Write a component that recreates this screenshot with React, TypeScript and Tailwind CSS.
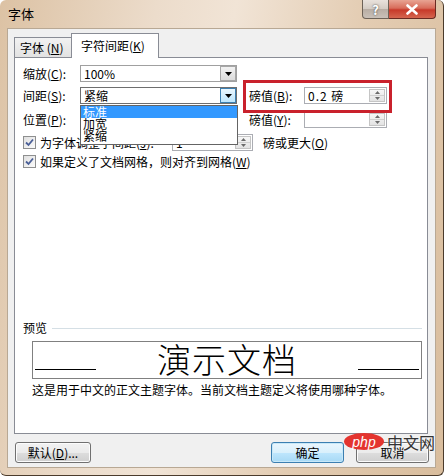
import React from "react";

function Arrow({ active = false }: { active?: boolean }) {
  return (
    <div
      className={
        "w-[16px] h-full flex items-center justify-center border-l " +
        (active
          ? "bg-[linear-gradient(180deg,#eaf6fd,#bee6fd)] border border-[#3c7fb1]"
          : "bg-[linear-gradient(180deg,#f2f2f2,#dcdcdc)] border border-[#a7a7a7]")
      }
    >
      <svg width="7" height="4" viewBox="0 0 7 4">
        <path d="M0 0H7L3.5 4Z" fill="#000" />
      </svg>
    </div>
  );
}

function Combo({ value, active = false, w = 157 }: { value: string; active?: boolean; w?: number }) {
  return (
    <div
      className={
        "h-[17px] flex items-stretch bg-white border " +
        (active ? "border-[#6e6e6e]" : "border-[#a0a0a0]")
      }
      style={{ width: w }}
    >
      <div className="flex-1 pl-[3px] leading-[15px]">{value}</div>
      <div className="p-[0px]">
        <Arrow active={active} />
      </div>
    </div>
  );
}

function Spin({ value, w = 83 }: { value: string; w?: number }) {
  return (
    <div className="h-[17px] flex items-stretch bg-white border border-[#abadb3]" style={{ width: w }}>
      <div className="flex-1 pl-[3px] leading-[15px] tracking-[1px]">{value}</div>
      <div className="w-[16px] flex flex-col my-[1px] mr-[1px] border border-[#c5c5c5] bg-[linear-gradient(180deg,#f7f7f7,#e3e3e3)]">
        <div className="flex-1 flex items-center justify-center border-b border-[#d0d0d0]">
          <svg width="5" height="3" viewBox="0 0 5 3">
            <path d="M0 3H5L2.5 0Z" fill="#6b6b6b" />
          </svg>
        </div>
        <div className="flex-1 flex items-center justify-center">
          <svg width="5" height="3" viewBox="0 0 5 3">
            <path d="M0 0H5L2.5 3Z" fill="#6b6b6b" />
          </svg>
        </div>
      </div>
    </div>
  );
}

function Check() {
  return (
    <div className="w-[13px] h-[13px] border border-[#8e8f8f] bg-[linear-gradient(135deg,#e0e0e0,#fbfbfb)] flex items-center justify-center">
      <svg width="9" height="9" viewBox="0 0 9 9">
        <path d="M1 4.5L3.5 7L8 1.5" stroke="#4a5f97" strokeWidth="1.8" fill="none" />
      </svg>
    </div>
  );
}

function Btn({ children, def = false, w = 73 }: { children: React.ReactNode; def?: boolean; w?: number }) {
  return (
    <div
      className={
        "h-[21px] rounded-[3px] border flex items-center justify-center leading-none " +
        (def
          ? "border-[#3c7fb1] bg-[linear-gradient(180deg,#eaf6fd_0%,#d9f0fc_50%,#bee6fd_51%,#a7d9f5_100%)] shadow-[inset_0_0_0_1px_#c8e8f8]"
          : "border-[#707070] bg-[linear-gradient(180deg,#f2f2f2_0%,#ebebeb_50%,#dddddd_51%,#cfcfcf_100%)] shadow-[inset_0_0_0_1px_#fcfcfc]")
      }
      style={{ width: w }}
    >
      {children}
    </div>
  );
}

export default function App() {
  return (
    <div className="w-[444px] h-[476px] bg-white font-['Noto_Sans_CJK_SC',sans-serif] text-[12px] text-black">
      <div className="relative w-[444px] h-[476px] rounded-[6px] border-r border-b border-[#4b3b2c] bg-[linear-gradient(100deg,#dcc2a4_0%,#ecdccb_30%,#f1e4d6_45%,#e3ccb2_70%,#d9bd9d_100%)] flex flex-col px-[7px]">
        {/* title bar */}
        <div className="h-[28px] flex items-start justify-between">
          <div className="mt-[6px] ml-[1px] text-[13px] leading-[16px]">字体</div>
          <div className="flex">
            <div className="w-[27px] h-[19px] rounded-bl-[4px] border border-t-0 border-[#6d6257] bg-[linear-gradient(180deg,#e9e2dc_0%,#d3cbc3_50%,#b8ada3_51%,#c9c0b8_100%)] flex items-center justify-center">
              <span className="text-[13px] font-bold text-white leading-none [text-shadow:0_0_2px_#333]">?</span>
            </div>
            <div className="w-[47px] h-[19px] rounded-br-[4px] border border-t-0 border-l-0 border-[#6a2a22] bg-[linear-gradient(180deg,#e8a493_0%,#d86d5b_45%,#c7392a_55%,#d5664f_100%)] flex items-center justify-center">
              <svg width="12" height="11" viewBox="0 0 12 11">
                <path d="M1.5 1.5L10.5 9.5M10.5 1.5L1.5 9.5" stroke="#fff" strokeWidth="2.6" strokeLinecap="round" />
              </svg>
            </div>
          </div>
        </div>
        {/* client */}
        <div className="h-[440px] bg-[#f0f0f0] border border-[#b8a894] flex flex-col px-[6px] pt-[4px]">
          {/* tabs */}
          <div className="h-[24px] flex items-end relative z-10">
            <div className="w-[58px] h-[20px] border border-b-0 border-[#898c95] bg-[linear-gradient(180deg,#f2f2f2,#e2e2e2)] flex items-center pl-[5px] mb-[-0px]">
              字体 (<span className="underline">N</span>)
            </div>
            <div className="w-[88px] h-[25px] -ml-[1px] mb-[-1px] border border-b-0 border-[#898c95] bg-white flex items-center pl-[9px]">
              字符间距(<span className="underline">K</span>)
            </div>
          </div>
          {/* panel */}
          <div className="relative w-[414px] h-[377px] border border-[#898c95] bg-white flex flex-col pl-[8px] pt-[7px]">
            {/* row1 */}
            <div className="flex items-center h-[17px]">
              <div className="w-[57px]">缩放(<span className="underline">C</span>):</div>
              <Combo value="100%" />
            </div>
            {/* row2 */}
            <div className="flex items-center h-[17px] mt-[5px]">
              <div className="w-[57px]">间距(<span className="underline">S</span>):</div>
              <Combo value="紧缩" active />
              <div className="w-[56px] ml-[11px] pl-[1px]">磅值(<span className="underline">B</span>):</div>
              <Spin value="0.2 磅" />
            </div>
            {/* row3 */}
            <div className="flex items-center h-[17px] mt-[7px]">
              <div className="w-[57px]">位置(<span className="underline">P</span>):</div>
              <Combo value="标准" />
              <div className="w-[56px] ml-[11px] pl-[1px]">磅值(<span className="underline">Y</span>):</div>
              <Spin value="" />
            </div>
            {/* row4 */}
            <div className="flex items-center h-[17px] mt-[6px]">
              <Check />
              <div className="ml-[4px] w-[132px]">为字体调整字间距(<span className="underline">J</span>):</div>
              <Spin value="1" w={81} />
              <div className="ml-[10px]">磅或更大(<span className="underline">O</span>)</div>
            </div>
            {/* row5 */}
            <div className="flex items-center h-[17px] mt-[2px]">
              <Check />
              <div className="ml-[4px]">如果定义了文档网格，则对齐到网格(<span className="underline">W</span>)</div>
            </div>

            <div className="flex-1" />

            {/* preview */}
            <div className="flex items-center pr-[5px]">
              <div>预览</div>
              <div className="flex-1 h-px bg-[#d5dfe5] ml-[5px]" />
            </div>
            <div className="ml-[9px] mt-[4px] w-[390px] h-[38px] border border-[#808080] flex items-end justify-between px-[2px] pb-[8px] relative">
              <div className="w-[61px] h-px bg-black" />
              <div className="absolute left-0 right-0 top-[-3px] text-center text-[34px] leading-[40px] font-light tracking-[1px]">演示文档</div>
              <div className="w-[61px] h-px bg-black" />
            </div>
            <div className="ml-[9px] mt-[4px] leading-[14px]">这是用于中文的正文主题字体。当前文档主题定义将使用哪种字体。</div>
            <div className="h-[36px]" />

            {/* red annotation box */}
            <div className="absolute left-[228px] top-[22px] w-[149px] h-[33px] border-[3px] border-[#c9212c]" />

            {/* dropdown list */}
            <div className="absolute left-[65px] top-[47px] w-[158px] h-[40px] border border-[#646464] bg-white flex flex-col">
              <div className="h-[12px] bg-[#3399ff] text-white leading-[12px] pl-[2px]">标准</div>
              <div className="h-[12px] leading-[12px] pl-[2px]">加宽</div>
              <div className="h-[12px] leading-[12px] pl-[2px]">紧缩</div>
            </div>
          </div>
          {/* buttons */}
          <div className="flex items-center justify-between mt-[8px] pl-[1px]">
            <Btn w={76}>默认(<span className="underline">D</span>)...</Btn>
            <div className="flex gap-[12px]">
              <Btn def>确定</Btn>
              <Btn>取消</Btn>
            </div>
          </div>
        </div>

        {/* watermark */}
        <div className="absolute left-[344px] top-[433px] flex items-center">
          <div className="w-[40px] h-[17px] rounded-[50%] bg-[#e4342f] flex items-center justify-center text-white italic text-[14px] leading-none font-['Liberation_Sans',sans-serif]">
            php
          </div>
          <div className="ml-[3px] text-[16px] leading-none text-[#333] [text-shadow:0_0_2px_#fff]">中文网</div>
        </div>
      </div>
    </div>
  );
}
